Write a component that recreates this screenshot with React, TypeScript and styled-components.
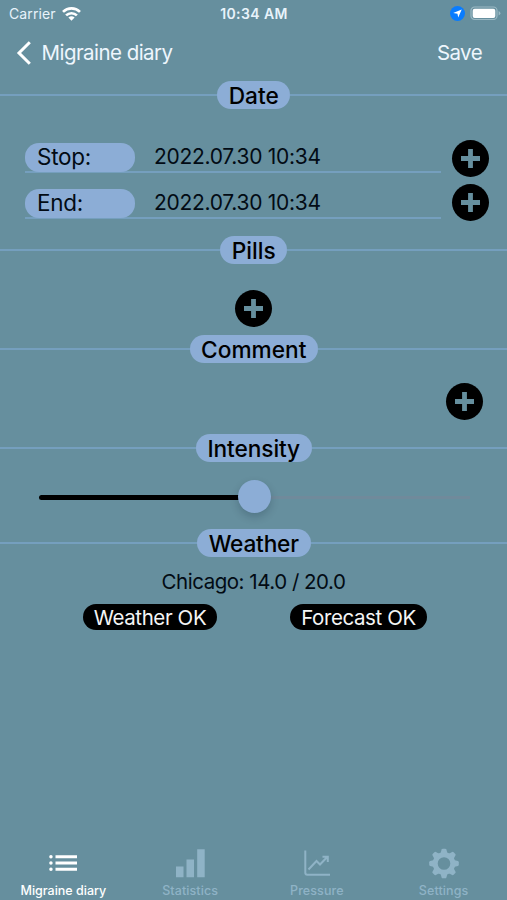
import React from "react";
import styled, { createGlobalStyle } from "styled-components";

const colors = {
  page: "#668f9e",
  pill: "#8cadd6",
  line: "#759fbe",
  ink: "#020b14",
  tabIdle: "#8fb3c6",
};

const GlobalStyle = createGlobalStyle`
  * { box-sizing: border-box; }
  body { margin: 0; background: ${colors.page}; }
`;

const Screen = styled.div`
  width: 507px;
  height: 900px;
  display: flex;
  flex-direction: column;
  overflow: hidden;
  background: ${colors.page};
  color: ${colors.ink};
  font-family: Inter, "Liberation Sans", sans-serif;
  white-space: nowrap;
`;

const StatusBar = styled.header`
  height: 27px;
  padding: 0 6px 0 9px;
  display: grid;
  grid-template-columns: 1fr auto 1fr;
  align-items: center;
  color: #e8f3fb;
  font-size: 14px;
`;

const Carrier = styled.div`
  display: flex;
  align-items: center;
  gap: 6px;
  letter-spacing: 0.1px;
`;

const Clock = styled.div`
  font-size: 14px;
  font-weight: 600;
  letter-spacing: 0.4px;
  margin-left: -2px;
`;

const Indicators = styled.div`
  display: flex;
  justify-content: flex-end;
  align-items: center;
  gap: 5px;
`;

const NavBar = styled.nav`
  height: 54px;
  padding: 0 25px 3px 16px;
  display: flex;
  align-items: center;
  justify-content: space-between;
  color: #eef6fd;
`;

const NavButton = styled.button<{ $spacing: number }>`
  display: flex;
  align-items: center;
  gap: 9.5px;
  padding: 0;
  border: 0;
  background: none;
  color: inherit;
  font: 400 20.5px/24px Inter, sans-serif;
  letter-spacing: ${(p) => p.$spacing}px;
`;

const Section = styled.section<{ $height: number }>`
  height: ${(p) => p.$height}px;
  flex: none;
`;

const SectionHeader = styled.div`
  display: flex;
  align-items: center;
  height: 28px;

  &::before,
  &::after {
    content: "";
    flex: 1;
    height: 2px;
    background: ${colors.line};
  }
`;

const SectionTitle = styled.h2<{ $width: number; $spacing: number }>`
  width: ${(p) => p.$width}px;
  height: 28px;
  margin: 0;
  border-radius: 14px;
  background: ${colors.pill};
  color: #000;
  text-align: center;
  text-indent: 0.5px;
  font-size: 22.7px;
  font-weight: 500;
  line-height: 29px;
  letter-spacing: ${(p) => p.$spacing}px;
`;

const DateGrid = styled.div`
  display: grid;
  grid-template-columns: 416px 37px;
  column-gap: 11px;
  padding: 31px 0 0 25px;
`;

const DateFields = styled.div`
  display: flex;
  flex-direction: column;
  gap: 16px;
  padding-top: 2.5px;
`;

const DateField = styled.div`
  display: flex;
  align-items: center;
  gap: 19px;
  height: 30px;
  border-bottom: 2px solid ${colors.line};
`;

const FieldLabel = styled.span`
  width: 110px;
  height: 29px;
  align-self: flex-start;
  padding-left: 12px;
  border-radius: 14px;
  background: ${colors.pill};
  font-size: 22.5px;
  line-height: 28px;
  letter-spacing: -0.25px;
`;

const FieldValue = styled.span`
  font-size: 21px;
  line-height: 28px;
  letter-spacing: -0.28px;
`;

const ButtonStack = styled.div`
  display: flex;
  flex-direction: column;
  gap: 7px;
`;

const RoundButton = styled.button`
  display: grid;
  place-items: center;
  width: 37px;
  height: 37px;
  padding: 0;
  border: 0;
  border-radius: 50%;
  background: #000;
`;

const ActionRow = styled.div<{ $align: string; $top: number }>`
  display: flex;
  justify-content: ${(p) => p.$align};
  padding: ${(p) => p.$top}px 24px 0;
`;

const Slider = styled.div`
  display: flex;
  align-items: center;
  height: 34px;
  margin: 17px 37px 0 39px;
`;

const SliderFill = styled.div`
  width: 201px;
  height: 5px;
  border-radius: 3px 0 0 3px;
  background: #000;
  transform: translateY(1px);
`;

const SliderThumb = styled.div`
  width: 33px;
  height: 33px;
  flex: none;
  margin-left: -2px;
  border-radius: 50%;
  background: ${colors.pill};
  box-shadow: 0 4px 9px rgba(0, 20, 40, 0.2);
  z-index: 1;
`;

const SliderRest = styled.div`
  flex: 1;
  height: 3px;
  background: #708a9b;
  transform: translateY(1px);
`;

const Reading = styled.p`
  margin: 12px 0 0;
  text-align: center;
  font-size: 20.5px;
  line-height: 26px;
  letter-spacing: -0.48px;
`;

const StatusRow = styled.div`
  display: flex;
  gap: 73px;
  padding: 9px 0 0 83px;
`;

const StatusPill = styled.span<{ $width: number }>`
  width: ${(p) => p.$width}px;
  height: 26px;
  border-radius: 13px;
  background: #000;
  color: #f5f5f5;
  text-align: center;
  font-size: 20.5px;
  line-height: 27px;
  letter-spacing: -0.4px;
`;

const TabBar = styled.nav`
  display: grid;
  grid-template-columns: repeat(4, 1fr);
  height: 57px;
  margin-top: auto;
`;

const Tab = styled.a<{ $active?: boolean }>`
  display: flex;
  flex-direction: column;
  align-items: center;
  color: ${(p) => (p.$active ? "#fff" : colors.tabIdle)};
  font-size: 12.5px;
  font-weight: 500;
  line-height: 16px;
  letter-spacing: ${(p) => (p.$active ? 0 : 0.1)}px;
`;

const TabIcon = styled.svg`
  width: 40px;
  height: 40px;
  flex: none;
`;

const PlusButton = ({ label }: { label: string }) => (
  <RoundButton aria-label={label}>
    <svg width="19" height="19" viewBox="0 0 19 19">
      <path d="M9.5 0v19M0 9.5h19" stroke={colors.page} strokeWidth="4.8" />
    </svg>
  </RoundButton>
);

const Heading = ({ title, width, spacing = 0 }: { title: string; width: number; spacing?: number }) => (
  <SectionHeader>
    <SectionTitle $width={width} $spacing={spacing}>{title}</SectionTitle>
  </SectionHeader>
);

const WifiIcon = () => (
  <svg width="19" height="14" viewBox="0 0 19 14" fill="none" stroke="#fff" strokeWidth="2.7">
    <path d="M1 4.9a12.2 12.2 0 0 1 17 0M4.1 8.4a7.8 7.8 0 0 1 10.8 0" />
    <path d="M6.4 10.6a4.6 4.6 0 0 1 6.2 0L9.5 13.8z" fill="#fff" stroke="none" />
  </svg>
);

const LocationIcon = () => (
  <svg width="15" height="15" viewBox="0 0 15 15">
    <circle cx="7.5" cy="7.5" r="7.5" fill="#087cff" />
    <path d="M11.7 3.4 8.2 11.4 7.5 7.7 3.2 7z" fill="#fff" />
  </svg>
);

const BatteryIcon = () => (
  <svg width="31" height="15" viewBox="0 0 31 15">
    <rect x="1" y="1" width="26" height="12.5" rx="3.6" fill="none" stroke="#9bb9c4" strokeWidth="1.2" />
    <rect x="2.7" y="2.7" width="22.6" height="9.2" rx="2" fill="#fff" />
    <path d="M28.6 5v4.5q1.8-.8 1.8-2.25T28.6 5z" fill="#9bb9c4" />
  </svg>
);

const GearIcon = () => (
  <TabIcon viewBox="0 0 40 40" fill="none" stroke="currentColor">
    <circle cx="20" cy="20.5" r="8.8" strokeWidth="5" />
    {[0, 45, 90, 135, 180, 225, 270, 315].map((angle) => (
      <path
        key={angle}
        d="M16.4 10.8 17.6 6.6Q17.9 5.7 18.8 5.7h2.4q.9 0 1.2.9L23.6 10.8z"
        transform={`rotate(${angle} 20 20.5)`}
        fill="currentColor"
        stroke="none"
      />
    ))}
  </TabIcon>
);

export default function App() {
  return (
    <>
      <GlobalStyle />
      <Screen>
        <StatusBar>
          <Carrier><span>Carrier</span><WifiIcon /></Carrier>
          <Clock>10:34 AM</Clock>
          <Indicators><LocationIcon /><BatteryIcon /></Indicators>
        </StatusBar>
        <NavBar>
          <NavButton $spacing={-0.55}>
            <svg width="16" height="24" viewBox="0 0 16 24" fill="none" stroke="#fff" strokeWidth="3">
              <path d="M13.8 1.2 3 12l10.8 10.8" />
            </svg>
            Migraine diary
          </NavButton>
          <NavButton $spacing={-0.6}>Save</NavButton>
        </NavBar>

        <Section $height={155}>
          <Heading title="Date" width={73} />
          <DateGrid>
            <DateFields>
              <DateField><FieldLabel>Stop:</FieldLabel><FieldValue>2022.07.30 10:34</FieldValue></DateField>
              <DateField><FieldLabel>End:</FieldLabel><FieldValue>2022.07.30 10:34</FieldValue></DateField>
            </DateFields>
            <ButtonStack>
              <PlusButton label="Set start" />
              <PlusButton label="Set end" />
            </ButtonStack>
          </DateGrid>
        </Section>

        <Section $height={99}>
          <Heading title="Pills" width={67} />
          <ActionRow $align="center" $top={26}><PlusButton label="Add pill" /></ActionRow>
        </Section>

        <Section $height={99}>
          <Heading title="Comment" width={128} />
          <ActionRow $align="flex-end" $top={20}><PlusButton label="Add comment" /></ActionRow>
        </Section>

        <Section $height={95}>
          <Heading title="Intensity" width={116} spacing={-0.1} />
          <Slider role="slider" aria-valuenow={50}>
            <SliderFill />
            <SliderThumb />
            <SliderRest />
          </Slider>
        </Section>

        <Section $height={120}>
          <Heading title="Weather" width={114} spacing={-0.2} />
          <Reading>Chicago: 14.0 / 20.0</Reading>
          <StatusRow>
            <StatusPill $width={134}>Weather OK</StatusPill>
            <StatusPill $width={137}>Forecast OK</StatusPill>
          </StatusRow>
        </Section>

        <TabBar>
          <Tab $active>
            <TabIcon viewBox="0 0 40 40" fill="none" stroke="currentColor" strokeWidth="3">
              <path d="M12.5 13.8H34M12.5 20H34M12.5 26.2H34" />
              <path d="M7.9 13.8h.1M7.9 20h.1M7.9 26.2h.1" strokeLinecap="round" strokeWidth="3.4" />
            </TabIcon>
            Migraine diary
          </Tab>
          <Tab>
            <TabIcon viewBox="0 0 40 40" fill="currentColor">
              <path d="M6 23.5H13.5V34.3H6zM16.5 16.5h7.5V34.3H16.5zM27.2 6.3h7.5v28h-7.5z" />
            </TabIcon>
            Statistics
          </Tab>
          <Tab>
            <TabIcon viewBox="0 0 40 40" fill="none" stroke="currentColor" strokeWidth="2">
              <path d="M8.3 7.5v22.2q0 2 2 2H33" />
              <path d="m11.5 26.5 8-8.5 3.5 3.5 7-7.3M25.5 13.7h5.3V19" />
            </TabIcon>
            Pressure
          </Tab>
          <Tab><GearIcon />Settings</Tab>
        </TabBar>
      </Screen>
    </>
  );
}
